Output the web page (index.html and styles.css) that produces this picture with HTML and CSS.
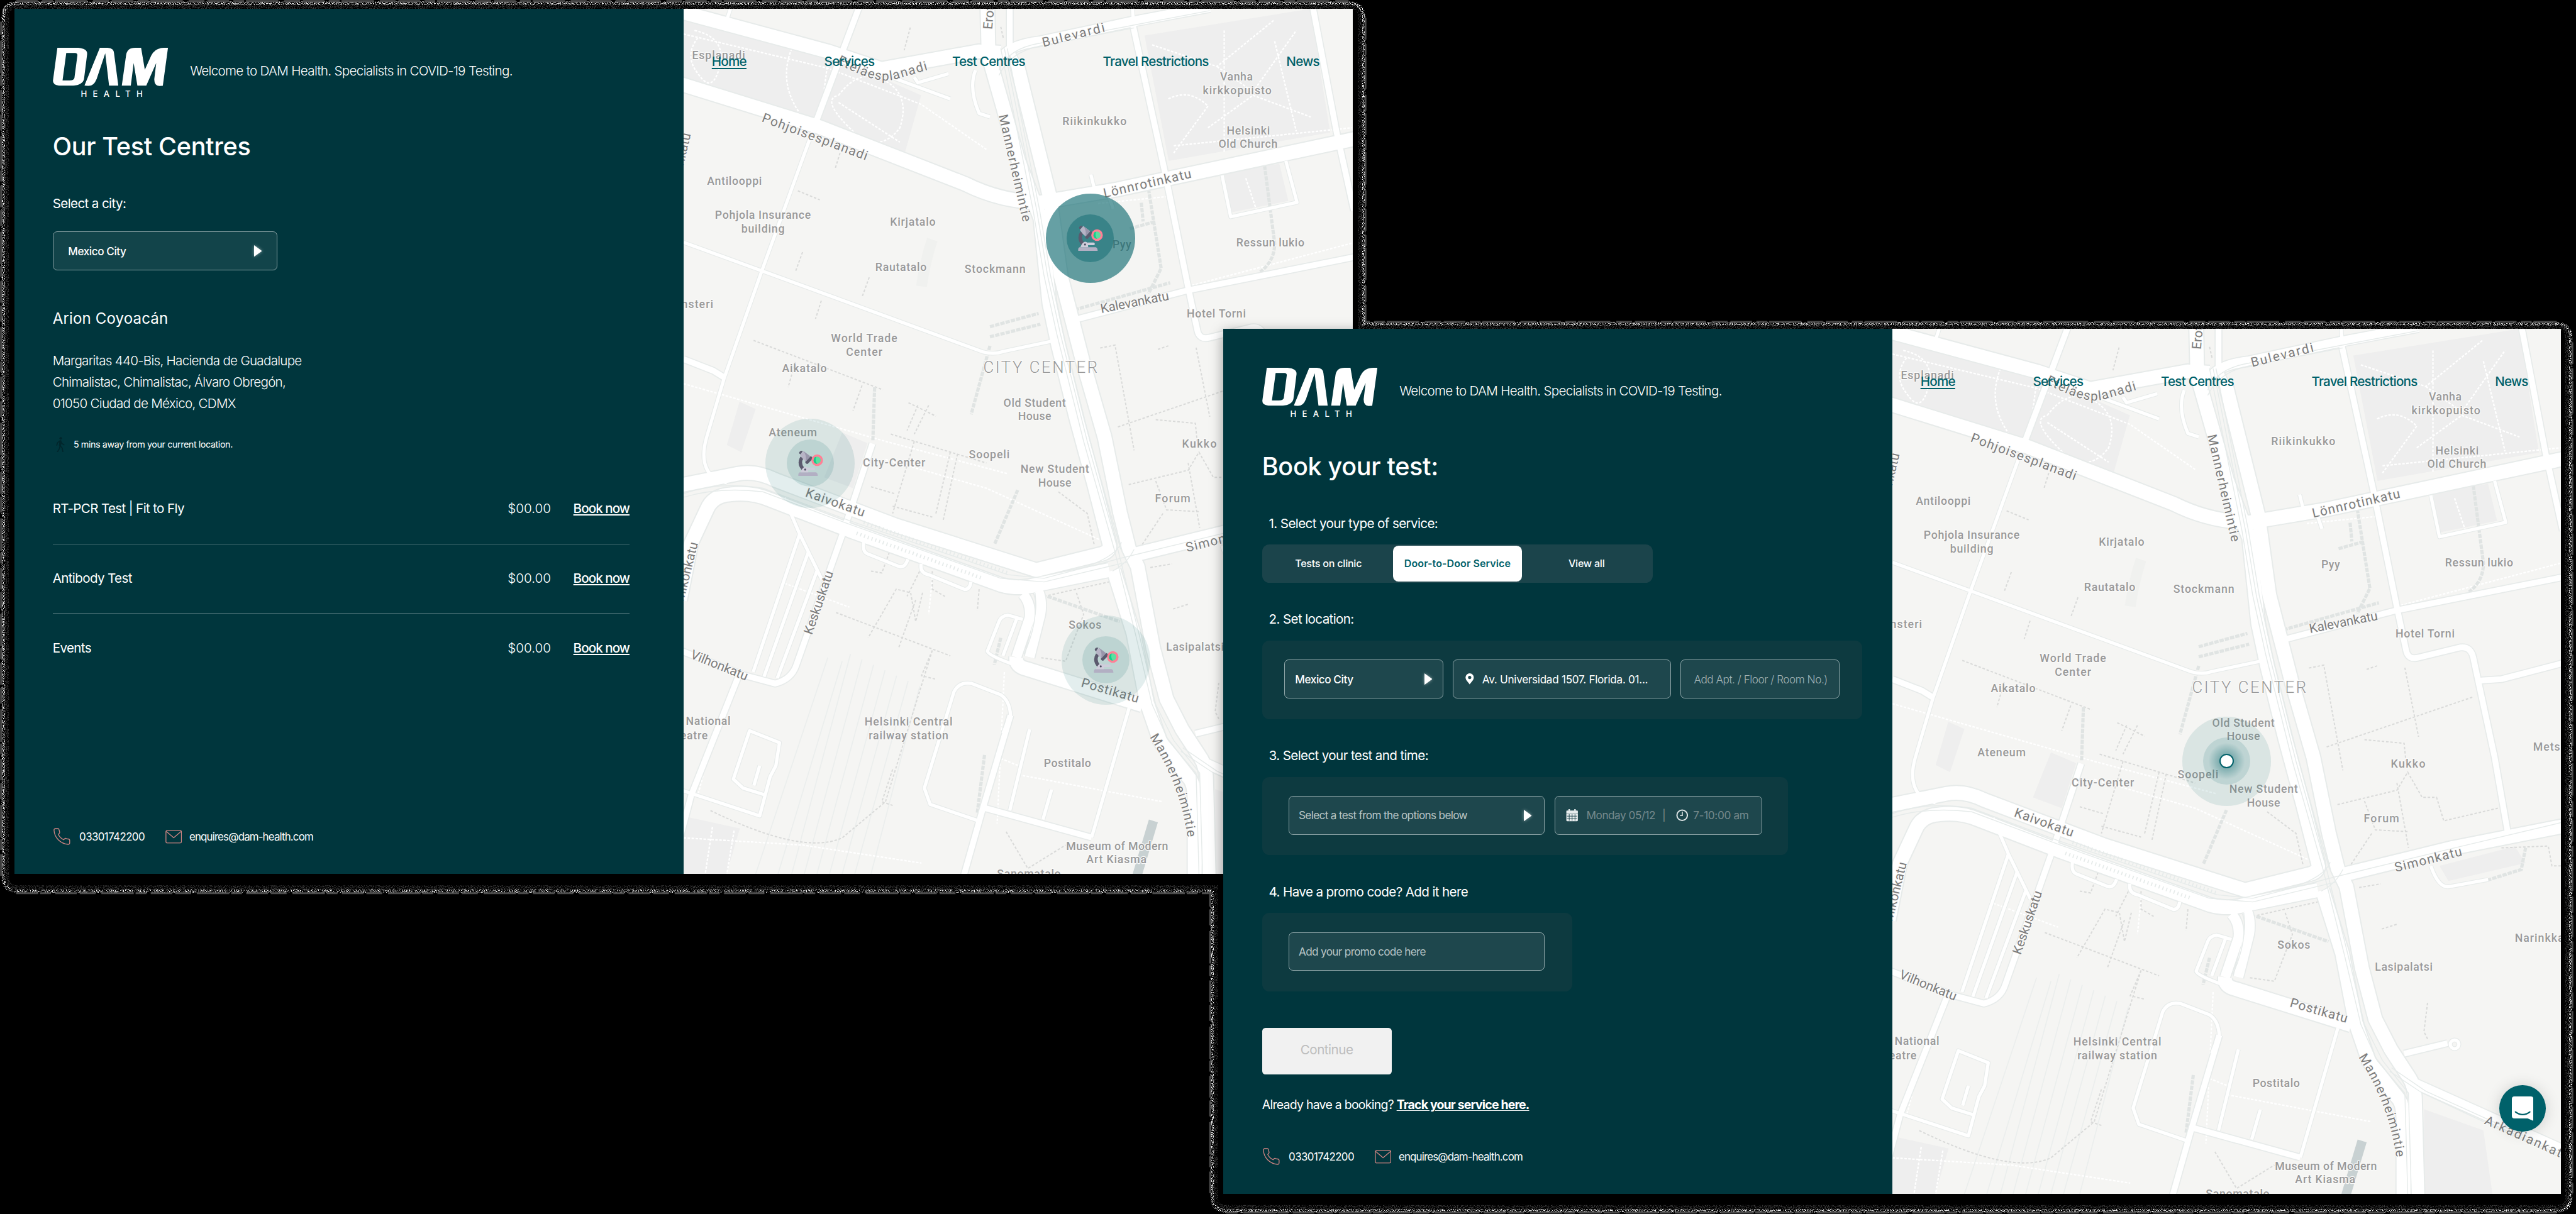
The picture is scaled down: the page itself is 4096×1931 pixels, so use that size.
FILE: index.html
```html
<!DOCTYPE html>
<html lang="en">
<head>
<meta charset="utf-8">
<title>DAM Health</title>
<link rel="stylesheet" href="styles.css">
</head>
<body>
<svg class="defs" aria-hidden="true">
  <defs>
    <filter id="speckle" filterUnits="userSpaceOnUse" x="0" y="0" width="7144" height="3368">
      <feTurbulence type="fractalNoise" baseFrequency="0.55" numOctaves="2" seed="4" result="n"/>
      <feColorMatrix in="n" type="matrix" values="0 0 0 0 1  0 0 0 0 1  0 0 0 0 1  9 0 0 0 -4.5" result="s"/>
      <feComposite in="s" in2="SourceGraphic" operator="in"/>
    </filter>
  </defs>
  <symbol id="logo" viewBox="78 65 962 318">
    <path fill="#fff" fill-rule="evenodd" d="M116 65H290Q368 72 364 118L338 325Q326 374 248 380H130Q78 374 79 340ZM190 108L159 337H215Q254 336 258 316L283 126Q283 110 262 108Z"/>
    <path fill="#fff" d="M470 65H535Q585 68 588 108L624 380H547L515 110L443 325Q420 383 375 383Q355 383 342 379Z"/>
    <path fill="#fff" d="M653 380L689 125Q698 65 765 65H814L845 248L898 130Q930 65 1005 65H1038L995 382Q985 384 965 384Q922 380 924 325L940 192L857 380H783L752 192L728 380Z"/>
  </symbol>
  <symbol id="phone" viewBox="0 0 24 24"><path fill="none" stroke="currentColor" stroke-width="1.2" stroke-linejoin="round" d="M23 18v3.2a2 2 0 0 1-2.2 2C10 22.500 1.500 14 .8 3.100A2 2 0 0 1 2.800.9H6a2 2 0 0 1 2 1.700c.2 1 .4 2 .7 2.900a2 2 0 0 1-.4 2.100L6.900 9.200a16 16 0 0 0 7.500 7.500l1.400-1.400a2 2 0 0 1 2.100-.4c1 .3 1.900.6 2.900.7A2 2 0 0 1 23 18z"/></symbol>
  <symbol id="mail" viewBox="0 0 46 38"><g fill="none" stroke="currentColor" stroke-width="2.300" stroke-linejoin="round"><rect x="1.500" y="1.500" width="43" height="35" rx="4"/><path d="M2 4l21 18L44 4"/></g></symbol>
  <symbol id="walk" viewBox="0 0 27 43"><circle cx="15" cy="4" r="3.600" fill="currentColor"/><path fill="none" stroke="currentColor" stroke-width="3" stroke-linecap="round" stroke-linejoin="round" d="M14 11l-1 14M13 11l-7 5-2 7M15 12l3 6 6 4M13 25l-2 8-5 8M14 25l5 6 2 10"/><path stroke="currentColor" stroke-width="6" stroke-linecap="round" d="M14 12l-1 11"/></symbol>
  <symbol id="arrow" viewBox="0 0 22 32"><path fill="#fff" d="M0 0l22 16L0 32z"/></symbol>
  <symbol id="pin" viewBox="0 0 24 31"><path fill="#fff" fill-rule="evenodd" d="M12 0a11.500 11.500 0 0 1 11.500 11.500C23.500 19 15 26 12 31 9 26 .5 19 .5 11.500A11.500 11.500 0 0 1 12 0zm0 7a4.500 4.500 0 1 0 0 9 4.500 4.500 0 0 0 0-9z"/></symbol>
  <symbol id="calendar" viewBox="0 0 34 34"><path fill="#e6eced" d="M3 4h28a2 2 0 0 1 2 2v6H1V6a2 2 0 0 1 2-2zM7 0h4v6H7zM23 0h4v6h-4zM1 13h32v18a3 3 0 0 1-3 3H4a3 3 0 0 1-3-3z"/><path stroke="#1b444b" stroke-width="1.600" d="M3 19.500h28M3 26.500h28M9 14v18M17 14v18M25 14v18"/></symbol>
  <symbol id="clock" viewBox="0 0 34 34"><circle cx="17" cy="17" r="14.500" fill="none" stroke="#dfe6e7" stroke-width="3.500"/><path fill="none" stroke="#dfe6e7" stroke-width="2.600" d="M17.500 7v11H11"/></symbol>
  <symbol id="scope" viewBox="150 140 210 214">
    <path fill="none" stroke="#5b5a6e" stroke-width="28" d="M186 200q-30 48 8 92"/>
    <path fill="#5b5a6e" d="M163 160q8-20 30-14l-18 28q-12-4-12-14zM212 236l44-46q16 4 18 20l-42 42q-18 0-20-16z"/>
    <path fill="#b7b4c6" d="M170 180l28-32 56 42-38 42q-24-18-46-52z"/><path fill="#9996ab" d="M198 148l56 42-38 42q10-50-18-84z"/>
    <path fill="#b2afc3" d="M168 320h132q14 4 15 30H157q-4-24 11-30z"/>
    <path fill="#cfcddb" d="M174 320q18-44 40-44 24 0 24 44z"/><path fill="#cfcddb" d="M230 282h52q10 2 10 11t-10 11h-52z"/>
    <circle cx="212" cy="298" r="8" fill="#4d4c60"/>
    <circle cx="310" cy="222" r="47" fill="#ff8096"/><circle cx="310" cy="222" r="29" fill="#5cdfa0"/><path fill="#10cf8b" d="M290 198q-20 30 2 50l18 4q-20-28-8-58z"/>
  </symbol>
</svg>

<svg class="edge" viewBox="0 0 7144 3368" aria-hidden="true">
  <g filter="url(#speckle)">
    <path class="dust" d="M45 14H3740Q3777 14 3777 50V903H7090Q7124 903 7124 940V3320Q7124 3354 7090 3354H3400Q3367 3354 3367 3320V2467H45Q14 2467 14 2430V50Q14 14 45 14Z"/>
    <path class="dust bright" d="M45 9H3740Q3782 9 3782 50V898H7090Q7129 898 7129 940V3320Q7129 3359 7090 3359H3400Q3362 3359 3362 3320V2472H45Q9 2472 9 2430V50Q9 9 45 9Z"/>
  </g>
  <path class="dash" d="M45 3H3740M3787 50V893H7090M7134 950V3310M7090 3364H3400M3356 3310V2478H45M3 2430V60"/>
</svg>

<main class="canvas">
  <section class="window centres">
    <div class="panel">
      <header class="brand">
        <div class="logo"><svg class="mark"><use href="#logo"/></svg><span class="health">HEALTH</span></div>
        <p class="welcome">Welcome to DAM Health. Specialists in COVID-19 Testing.</p>
      </header>
      <h1>Our Test Centres</h1>
      <p class="label">Select a city:</p>
      <div class="field city"><span class="strong">Mexico City</span><svg class="arrow"><use href="#arrow"/></svg></div>
      <h2>Arion Coyoacán</h2>
      <address>Margaritas 440-Bis, Hacienda de Guadalupe<br>Chimalistac, Chimalistac, Álvaro Obregón,<br>01050 Ciudad de México, CDMX</address>
      <p class="distance"><svg class="walk"><use href="#walk"/></svg><span>5 mins away from your current location.</span></p>
      <ul class="tests">
        <li><span class="name">RT-PCR Test | Fit to Fly</span><span class="price">$00.00</span><a class="book">Book now</a></li>
        <li><span class="name">Antibody Test</span><span class="price">$00.00</span><a class="book">Book now</a></li>
        <li><span class="name">Events</span><span class="price">$00.00</span><a class="book">Book now</a></li>
      </ul>
      <footer><svg class="phone"><use href="#phone"/></svg><span class="tel">03301742200</span><svg class="mail"><use href="#mail"/></svg><span class="email">enquires@dam-health.com</span></footer>
    </div>
    <div class="map">
      <svg class="tiles" id="city-map" viewBox="0 0 1856 2400" preserveAspectRatio="none">
        <g class="park">
          <path d="M0 27L401 126 659 240 610 414 377 308 0 193zM1279 74L1739 0 1794 343 1346 422zM1500 454L1653 430 1678 533 1518 565zM0 2240L156 2274 119 2400H0zM1475 2165L1640 2224 1665 2400H1475zM1518 1490L1727 1436 1757 1482 1543 1532zM155 1090L200 1110 160 1230 120 1210zM440 1175L510 1205 470 1330 390 1300z"/>
        </g>
        <g class="rails"><path d="M463 1790L300 2400M495 1805L335 2400M527 1820L370 2400M559 1835L405 2400M591 1850L440 2400M623 1865L475 2400M655 1880L520 2400M440 1810L262 2400M400 1800L200 2400"/></g>
        <g class="dots-white">
          <path d="M30 60q90 20 70 100t-60 20q-40-50 0-100M300 110q-40 100 30 190M401 140L380 300M430 240q60-80 130-40t40 130q-60 80-140 0t-30-90M430 260L600 370M0 70L401 165 659 265 840 390M1300 100L1480 160 1640 30M1480 160L1580 230 1700 60M1345 250q60-30 110 20L1360 400M1455 330L1580 240 1740 300M1500 60L1500 400M1640 90L1700 340M0 1040L560 1200 900 1290M270 1590L460 1660M890 1840L870 2260M0 2300L330 2320 660 2370M560 1250L840 1330 1170 1480M690 1580L680 1680M1050 700L1100 980 1240 1480M1360 380L1855 330M1400 770L1855 650M1560 470L1590 560M90 1990L40 2180M80 2270L60 2400M140 2280L120 2400M880 2080L930 2100M930 2125L1330 2200M1150 540L1350 520"/>
        </g>
        <g class="dots">
          <path d="M194 920L553 1057M495 1045L470 1115M310 980L290 1050M317 505L378 530M434 400L420 445M330 675L310 730M515 745L495 800M382 810L366 860M629 52L612 115M880 50L888 85M624 1093L700 1130M680 1100L640 1180M650 1100L620 1170M575 1180L840 1260M640 1200L580 1400M740 1230L700 1400M760 1235L720 1420M520 1326L585 1345M580 1380L690 1410M1156 941L1197 933 1250 1225M1316 945L1345 935M1422 940L1460 1132M1205 1160L1612 1021M1310 1140L1420 1150 1425 1200M1235 1320L1400 1280 1430 1230 1470 1300 1510 1300 1530 1365 1680 1330M1310 1310L1340 1390 1430 1395M1400 1260L1432 1440M1330 1400L1270 1490M1040 1340L1120 1400 1140 1490M520 1560L550 1565 570 1510M663 1620L644 1700 630 1620 590 1610 512 1745M644 1640L596 1775M423 1675L740 1795M690 1780L560 2200 440 2300Q330 2350 70 2222M690 1780L660 1850 700 1860M580 2110L550 2200 580 2210M660 1550L620 1630M690 1560L690 1610 725 1630M820 1610L815 1670M1000 1630L1180 1590M1090 1620L1110 1680 1060 1810 990 1800M895 2283L955 2385 1060 2320M1485 1870L1475 1950 1485 1970M1295 1550L1355 1540M1358 1665L1400 1652M1690 1440L1820 1435 1830 1490 1855 1490"/>
        </g>
        <g class="ticks"><path d="M850 935L798 1125M927 1335L863 1485M1010 1630L1210 1700M530 1050L525 1200M1270 538L1275 590M1238 610L1310 590M1290 500L1325 720 1290 790M1610 420L1640 650Q1640 700 1600 730M850 882L985 845M850 910L990 875M1085 835L1350 760M880 1745L862 1820M835 2070L815 2230M1650 1530L1745 1500 1757 1440"/></g>
        <g class="lots"><path d="M690 640q-20 60-30 130"/><path class="kiasma" d="M1291 2249L1316 2257 1273 2400H1246z"/></g>
        <g class="roads case"></g>
        <g class="roads fill">
          <g class="w10">
            <path d="M365 320L217 727 113 1023 64 1188Q40 1270 89 1306L120 1315M0 648L217 727 831 952Q860 960 890 950L1027 921M130 0L120 30"/>
            <path d="M322 1457L193 1840M346 1507L223 1853M371 1557L260 1857M279 1357L322 1457 383 1582"/>
            <path d="M-5 2168L211 2239 240 2130 256 2100 266 2036 183 2003 138 2137 165 2162 223 2180M211 2100L195 2155"/>
            <path d="M819 2253L684 2207 668 2162 750 1895Q765 1865 800 1872L880 1903Q905 1920 907 1960L886 2010"/>
            <path d="M1132 2299L1236 1940M960 1999L905 2224M1021 2166L997 2249M941 1694L900 1682Q880 1685 875 1700L843 1782Q845 1795 929 1824M925 1690L886 1795"/>
            <path d="M500 1478Q495 1505 510 1512L600 1548Q615 1550 622 1527M659 1540Q655 1565 680 1570L780 1611Q795 1610 797 1590"/>
            <path d="M1494 462L1518 577 1702 537 1671 422M585 193L740 250M1494 1490Q1515 1550 1543 1548L1653 1528M1130 460L1140 500M1180 520L1192 555M810 170Q790 220 820 290L850 300M640 190L650 205 735 180M1245 -10L1248 40"/>
            <circle cx="1560" cy="1985" r="12"/>
          </g>
          <g class="w18">
            <path d="M489 -10L365 320M1745 -10L1812 343 1860 560M1076 865L1395 782 1870 687M905 -10V110L923 146M1628 976L1690 972 1870 925M0 972L82 1004 113 1023"/>
            <path d="M1248 35V51L1334 446 1401 778 1425 890Q1430 920 1460 912L1575 884Q1605 880 1612 913L1671 1188 1708 1400"/>
            <path d="M524 1206L444 1448 313 1820Q300 1860 254 1872L168 1849 -10 1780M150 1857L21 2182 -10 2300M907 1960L831 2216 776 2410M831 2216L1132 2299M1420 2011L1540 1982"/>
          </g>
          <g class="w28">
            <path d="M941 1623Q965 1650 960 1690L923 1799M984 1615Q996 1640 990 1680L960 1799"/>
            <path d="M880 140Q900 100 990 90L1248 35 1460 -5"/>
            <path d="M1444 2091L1870 2282"/>
          </g>
          <g class="w40">
            <path d="M-20 205L377 328 782 486Q880 535 990 537L1199 502 1880 357"/>
            <path d="M-20 5L400 118 549 167 819 118 880 122"/>
            <path d="M843 -10L846 130 929 422 990 581 1015 818 1040 936 1089 1134 1138 1315 1181 1482Q1186 1505 1160 1512L978 1557 585 1432 254 1307Q200 1280 150 1290L-10 1322"/>
            <path d="M923 146L1015 517 1046 739 1107 976 1168 1188 1211 1398 1236 1498 1260 1548 1303 1774 1340 1915 1383 1999 1432 2074Q1450 2100 1450 2140L1457 2410"/>
            <path d="M-10 1640L21 1482 64 1390Q80 1350 130 1347 190 1340 240 1362L463 1448 880 1598Q930 1612 978 1598L1181 1557"/>
            <path d="M1193 1557L1248 1732 1285 1924 1322 2032 1401 2132Q1418 2150 1418 2200V2410"/>
            <path d="M923 1799Q920 1825 954 1832L1273 1932"/>
            <path d="M1248 1515L1555 1440 1870 1378"/>
          </g>
        </g>
        <g class="tracks">
          <path d="M890 110L980 560 1010 740 1045 900 1120 1200 1205 1500 1265 1740 1310 1930 1360 2030 1432 2120 1440 2400M880 110L970 560 1000 740 1035 900 1110 1200 1195 1500 1255 1740 1300 1930 1345 2030 1422 2120 1430 2400M898 110L988 560 1018 740 1053 900 1128 1200 1213 1500M875 170Q900 110 990 95L1250 45 1460 5M875 185Q905 120 990 103L1250 53M0 1345Q100 1310 220 1330L460 1420 900 1570 1000 1580 1230 1520 1560 1440 1855 1370M0 1355Q100 1325 220 1340L460 1430 880 1580 1000 1590 1230 1535M1380 2060L1470 2120 1855 2300M1385 2050L1480 2115 1855 2285M975 1620Q985 1700 945 1790M1110 1550Q1200 1520 1215 1480M1190 1560Q1230 1540 1250 1500"/>
          <path class="sleepers" d="M500 1425L900 1565M480 1455L830 1580"/>
        </g>
        <g class="poi">
          <text x="97" y="140" textLength="147">Esplanadi</text>
          <text x="1534" y="199" textLength="91">Vanha</text><text x="1536" y="237" textLength="191">kirkkopuisto</text>
          <text x="1140" y="323" textLength="178">Riikinkukko</text>
          <text x="1567" y="348" textLength="120">Helsinki</text><text x="1566" y="386" textLength="164">Old Church</text>
          <text x="141" y="488" textLength="152">Antilooppi</text>
          <text x="220" y="583" textLength="266">Pohjola Insurance</text><text x="220" y="621" textLength="120">building</text>
          <text x="636" y="601" textLength="126">Kirjatalo</text><text x="603" y="727" textLength="142">Rautatalo</text><text x="864" y="733" textLength="169">Stockmann</text>
          <text x="1216" y="664" textLength="52">Pyy</text><text x="1628" y="660" textLength="189">Ressun lukio</text>
          <text x="38" y="830" textLength="88">nsteri</text><text x="1478" y="857" textLength="164">Hotel Torni</text>
          <text x="501" y="925" textLength="184">World Trade</text><text x="501" y="962" textLength="101">Center</text>
          <text x="335" y="1008" textLength="124">Aikatalo</text>
          <text class="district" x="990" y="1010" textLength="317">CITY CENTER</text>
          <text x="974" y="1104" textLength="173">Old Student</text><text x="974" y="1141" textLength="92">House</text>
          <text x="303" y="1186" textLength="134">Ateneum</text><text x="1825" y="1170" textLength="94">Metso</text>
          <text x="584" y="1269" textLength="173">City-Center</text><text x="848" y="1247" textLength="113">Soopeli</text>
          <text x="1030" y="1288" textLength="190">New Student</text><text x="1030" y="1326" textLength="92">House</text>
          <text x="1431" y="1217" textLength="96">Kukko</text><text x="1357" y="1369" textLength="98">Forum</text>
          <text x="1114" y="1720" textLength="91">Sokos</text><text x="1419" y="1780" textLength="160">Lasipalatsi</text><text x="1795" y="1701" textLength="136">Narinkka</text>
          <text x="68" y="1987" textLength="124">National</text><text x="29" y="2026" textLength="76">eatre</text>
          <text x="624" y="1989" textLength="244">Helsinki Central</text><text x="624" y="2027" textLength="221">railway station</text>
          <text x="1065" y="2103" textLength="131">Postitalo</text>
          <text x="1203" y="2334" textLength="283">Museum of Modern</text><text x="1201" y="2370" textLength="167">Art Kiasma</text>
          <text x="958" y="2410" textLength="177">Sanomatalo</text>
        </g>
        <g class="street">
          <text transform="translate(998 106) rotate(-14)" textLength="178">Bulevardi</text>
          <path class="guide" id="etela" d="M424 150Q490 186 530 195T600 192L710 160"/>
          <text textLength="268"><textPath href="#etela">Eteläesplanadi</textPath></text>
          <text transform="translate(856 58) rotate(-85)">Erottaja</text>
          <text transform="translate(215 312) rotate(20.500)" textLength="310">Pohjoisesplanadi</text>
          <text transform="translate(874 296) rotate(77.200)" textLength="304">Mannerheimintie</text>
          <text transform="translate(1168 524) rotate(-13)" textLength="249">Lönnrotinkatu</text>
          <text transform="translate(1159 844) rotate(-11)" textLength="193">Kalevankatu</text>
          <text class="end" transform="translate(20 348) rotate(-77)">Kluuvikatu</text>
          <text transform="translate(336 1352) rotate(19.500)" textLength="172">Kaivokatu</text>
          <text transform="translate(356 1738) rotate(-71)" textLength="184">Keskuskatu</text>
          <text class="end" transform="translate(40 1483) rotate(-76)">Mikonkatu</text>
          <text transform="translate(1397 1507) rotate(-14)" textLength="191">Simonkatu</text>
          <text transform="translate(17 1801) rotate(22)" textLength="168">Vilhonkatu</text>
          <text transform="translate(1101 1880) rotate(16)" textLength="165">Postikatu</text>
          <path class="guide" id="manner" d="M1293 2020Q1388 2170 1401 2325"/>
          <text textLength="300"><textPath href="#manner">Mannerheimintie</textPath></text>
          <text transform="translate(1641 2205) rotate(24)" textLength="254">Arkadiankatu</text>
        </g>
      </svg>
      <nav><a class="on">Home</a><a>Services</a><a>Test Centres</a><a>Travel Restrictions</a><a>News</a></nav>
      <span class="marker strong-marker m1"><span class="core"><svg><use href="#scope"/></svg></span></span>
      <span class="marker m2"><span class="core"><svg><use href="#scope"/></svg></span></span>
      <span class="marker m3"><span class="core"><svg><use href="#scope"/></svg></span></span>
    </div>
  </section>

  <section class="window booking">
    <div class="panel">
      <header class="brand">
        <div class="logo"><svg class="mark"><use href="#logo"/></svg><span class="health">HEALTH</span></div>
        <p class="welcome">Welcome to DAM Health. Specialists in COVID-19 Testing.</p>
      </header>
      <h1>Book your test:</h1>
      <p class="label step1">1. Select your type of service:</p>
      <div class="segments"><span>Tests on clinic</span><span class="active">Door-to-Door Service</span><span>View all</span></div>
      <p class="label step">2. Set location:</p>
      <div class="group location">
        <div class="field f-city"><span class="strong">Mexico City</span><svg class="arrow"><use href="#arrow"/></svg></div>
        <div class="field f-street"><svg class="pin"><use href="#pin"/></svg><span class="value">Av. Universidad 1507. Florida. 01...</span></div>
        <div class="field f-apt"><span class="hint">Add Apt. / Floor / Room No.)</span></div>
      </div>
      <p class="label step">3. Select your test and time:</p>
      <div class="group wide">
        <div class="field f-test"><span class="hint bright">Select a test from the options below</span><svg class="arrow"><use href="#arrow"/></svg></div>
        <div class="field f-time"><svg class="ic"><use href="#calendar"/></svg><span class="dim day">Monday 05/12</span><span class="dim bar">|</span><svg class="ic"><use href="#clock"/></svg><span class="dim hour">7-10:00 am</span></div>
      </div>
      <p class="label step">4. Have a promo code? Add it here</p>
      <div class="group promo">
        <div class="field f-test"><span class="hint bright">Add your promo code here</span></div>
      </div>
      <button class="continue">Continue</button>
      <p class="track">Already have a booking? <a>Track your service here.</a></p>
      <footer><svg class="phone"><use href="#phone"/></svg><span class="tel">03301742200</span><svg class="mail"><use href="#mail"/></svg><span class="email">enquires@dam-health.com</span></footer>
    </div>
    <div class="map">
      <svg class="tiles" id="city-map-copy" viewBox="0 0 1856 2400" preserveAspectRatio="none"></svg>
      <nav><a class="on">Home</a><a>Services</a><a>Test Centres</a><a>Travel Restrictions</a><a>News</a></nav>
      <span class="marker m4"><span class="core glow"><span class="dot"></span></span></span>
      <span class="chat"><svg viewBox="0 0 60 68"><path fill="#fff" d="M7 0H53Q60 0 60 7V68L44 61H7Q0 61 0 54V7Q0 0 7 0Z"/><path fill="none" stroke="#00616a" stroke-width="4" stroke-linecap="round" d="M10 43Q30 58 50 43"/></svg></span>
    </div>
  </section>
</main>
<script src="map.js"></script>
</body>
</html>
```
FILE: styles.css
```css
/* 1rem = 100 artboard units */
html { font-size: 57.335px; }
* { box-sizing: border-box; }
body { margin: 0; background: #000; font-family: Inter, "Liberation Sans", sans-serif; color: #fff; overflow: hidden; }
h1, h2, p, ul { margin: 0; padding: 0; }
.defs { position: absolute; width: 0; height: 0; }
.canvas { position: relative; width: 71.44rem; height: 33.68rem; overflow: hidden; }
.edge { position: absolute; left: 0; top: 0; width: 71.44rem; height: 33.68rem; }
.dust { fill: none; stroke: #fff; stroke-opacity: .22; stroke-width: 22; }
.dust.bright { stroke-opacity: .95; stroke-width: 9; }
.dash { fill: none; stroke: #4c4c4c; stroke-width: 5; stroke-dasharray: 60 12 30 5 90 16 44 8; }

.window { position: absolute; display: flex; width: 37.11rem; height: 24rem; background: #00363d; }
.centres { left: .4rem; top: .24rem; }
.booking { left: 33.92rem; top: 9.12rem; box-shadow: 0 .08rem .35rem rgba(0,0,0,.38); }
.panel { flex: 0 0 18.56rem; display: flex; flex-direction: column; align-items: flex-start; padding: 1.09rem 0 .8rem 1.06rem; }
.booking .panel { padding-left: 1.08rem; }

.brand { display: flex; height: 1.37rem; }
.logo { width: 3.2rem; display: flex; flex-direction: column; }
.mark { flex: none; width: 3.2rem; height: 1.06rem; }
.health { flex: none; margin: .1rem 0 0 .78rem; font-size: .23rem; line-height: .23rem; letter-spacing: .163rem; font-weight: 500; }
.welcome { margin-left: .61rem; line-height: 1.3rem; font-size: .36rem; font-weight: 300; letter-spacing: -.034em; white-space: nowrap; }
h1 { margin-top: .98rem; font-size: .69rem; line-height: .8rem; font-weight: 500; letter-spacing: -.008em; white-space: nowrap; }
.label { font-size: .36rem; line-height: .5rem; font-weight: 400; letter-spacing: -.031em; margin-top: .93rem; white-space: nowrap; }
.field { display: flex; align-items: center; height: 1.08rem; border: .025rem solid #8fa6a9; border-radius: .12rem; background: rgba(255,255,255,.07); font-size: .3rem; white-space: nowrap; }
.arrow { width: .22rem; height: .32rem; margin-left: auto; filter: drop-shadow(0 0 .05rem rgba(255,255,255,.5)); }
.city { width: 6.24rem; margin-top: .51rem; padding: 0 .41rem; }
.strong { font-weight: 500; letter-spacing: -.026em; }
.value { letter-spacing: -.018em; }
h2 { margin-top: 1.05rem; font-size: .42rem; line-height: .6rem; font-weight: 400; letter-spacing: .005em; }
address { margin-top: .56rem; font-style: normal; font-size: .36rem; line-height: .6rem; font-weight: 300; letter-spacing: -.036em; white-space: nowrap; }
.distance { display: flex; align-items: center; margin-top: .6rem; height: .44rem; font-size: .25rem; letter-spacing: -.029em; }
.walk { width: .27rem; height: .43rem; margin: 0 .24rem 0 .07rem; color: #00262c; }
.tests { list-style: none; width: 16rem; margin-top: .62rem; }
.tests li { display: flex; align-items: center; height: 1.93rem; padding-bottom: .04rem; font-size: .36rem; border-bottom: .02rem solid #4f7479; }
.tests li:last-child { border: 0; height: 1.88rem; padding: 0; }
.name { flex: 1; letter-spacing: -.032em; }
.price { font-weight: 300; width: 1.2rem; margin-right: .62rem; }
.book { font-weight: 500; letter-spacing: -.047em; text-decoration: underline; text-underline-offset: .04rem; width: 1.56rem; white-space: nowrap; }
footer { display: flex; align-items: center; height: .46rem; margin-top: auto; font-size: .295rem; white-space: nowrap; }
.phone { width: .47rem; height: .47rem; margin: 0 .24rem 0 .03rem; color: #cf8583; }
.tel { width: 1.82rem; letter-spacing: -.036em; }
.email { letter-spacing: -.051em; }
.mail { width: .46rem; height: .38rem; margin: 0 .21rem 0 .56rem; color: #cf8583; }

.step1 { margin: .92rem 0 0 .19rem; }
.step { margin: .77rem 0 0 .19rem; }
.segments { display: flex; width: 10.84rem; height: 1.07rem; margin-top: .32rem; padding: .04rem .05rem; border-radius: .2rem; background: #1b444b; font-size: .28rem; font-weight: 500; letter-spacing: -.014em; }
.segments span { flex: 1; display: flex; align-items: center; justify-content: center; white-space: nowrap; }
.segments .active { background: #fff; color: #00616a; border-radius: .15rem; font-weight: 600; letter-spacing: .005em; }
.group { display: flex; align-items: flex-start; height: 2.18rem; margin-top: .33rem; border-radius: .2rem; background: #0d3a40; padding: .53rem 0 0 .73rem; }
.location { width: 16.64rem; padding-left: .62rem; gap: .27rem; }
.wide { width: 14.58rem; gap: .28rem; }
.promo { width: 8.61rem; }
.f-city { width: 4.4rem; padding: 0 .28rem; }
.f-street { width: 6.05rem; padding-left: .34rem; }
.f-apt { width: 4.41rem; padding-left: .35rem; }
.f-test { width: 7.1rem; padding: 0 .33rem 0 .27rem; }
.f-time { width: 5.77rem; padding-left: .31rem; }
.pin { width: .24rem; height: .31rem; margin-right: .22rem; }
.ic { width: .34rem; height: .34rem; }
.hint { color: #a3b3b5; font-weight: 300; letter-spacing: -.028em; }
.hint.bright { color: #b9c5c6; font-weight: 400; letter-spacing: -.039em; }
.dim { color: #75898c; letter-spacing: -.028em; }
.day { margin-left: .22rem; width: 1.9rem; }
.bar { width: .49rem; text-align: center; margin-right: .09rem; }
.hour { margin-left: .14rem; letter-spacing: -.02em; }
.continue { width: 3.59rem; height: 1.29rem; margin-top: 1.01rem; padding: 0 0 .1rem; border: 0; border-radius: .09rem; background: #f1f1f1; color: #bdbdbd; font: 400 .36rem Inter, sans-serif; letter-spacing: -.025em; }
.track { margin-top: .59rem; line-height: .5rem; font-size: .34rem; letter-spacing: -.038em; white-space: nowrap; }
.track a { font-weight: 700; letter-spacing: -.043em; text-decoration: underline; text-underline-offset: .04rem; }

.map { position: relative; flex: 1; overflow: hidden; background: #f5f5f3; }
.tiles { position: absolute; inset: 0; width: 100%; height: 100%; }
nav { position: relative; display: flex; justify-content: space-between; padding: 1.23rem .92rem 0 .78rem; font-size: .36rem; line-height: .5rem; font-weight: 500; letter-spacing: -.037em; color: #00616a; white-space: nowrap; }
.on { text-decoration: underline; text-underline-offset: .05rem; }
.marker { position: absolute; width: 2.47rem; height: 2.47rem; margin: -1.235rem 0 0 -1.235rem; border-radius: 50%; display: flex; align-items: center; justify-content: center; background: rgba(0,97,104,.11); }
.core { width: 1.31rem; height: 1.31rem; border-radius: 50%; display: flex; align-items: center; justify-content: center; background: rgba(0,97,104,.13); }
.core svg { width: .72rem; height: .73rem; }
.strong-marker { background: rgba(0,97,104,.6); }
.strong-marker .core { background: rgba(0,97,104,.42); }
.m1 { left: 11.28rem; top: 6.37rem; }
.m2 { left: 3.51rem; top: 12.61rem; }
.m3 { left: 11.71rem; top: 18.07rem; }
.m4 { left: 9.27rem; top: 12rem; }
.core.glow { background: radial-gradient(circle, rgba(0,97,104,.5) 12%, rgba(0,97,104,.13) 55%); }
.dot { width: .4rem; height: .4rem; border-radius: 50%; background: #fff; border: .045rem solid #00616a; }
.chat { position: absolute; left: 16.84rem; top: 20.99rem; width: 1.28rem; height: 1.28rem; border-radius: 50%; background: #00616a; display: flex; align-items: center; justify-content: center; box-shadow: 0 .02rem .4rem rgba(0,0,0,.16); }
.chat svg { width: .6rem; height: .68rem; }

.park path { fill: #eeeeee; }
.rails path { fill: none; stroke: #ebeeed; stroke-width: 3; }
.dots-white path { fill: none; stroke: #fff; stroke-width: 4; stroke-dasharray: 7 4; }
.dots path { fill: none; stroke: #d9dad9; stroke-width: 3.5; stroke-dasharray: 7 5; }
.ticks path { fill: none; stroke: #e0e4e3; stroke-width: 9; stroke-dasharray: 12 3; }
.lots path { fill: none; stroke: #f0f1ef; stroke-width: 30; }
.lots .kiasma { fill: #c8d1d2; stroke: none; }
.roads { fill: none; stroke-linejoin: round; }
.roads.case { stroke: #e7ebea; }
.roads.fill { stroke: #fff; }
.fill .w40 { stroke-width: 38; } .case .w40 { stroke-width: 45; }
.fill .w28 { stroke-width: 27; } .case .w28 { stroke-width: 33; }
.fill .w18 { stroke-width: 16; } .case .w18 { stroke-width: 22; }
.fill .w10 { stroke-width: 9; } .case .w10 { stroke-width: 13; }
.tracks path { fill: none; stroke: #e6ebea; stroke-width: 2.5; }
.tracks .sleepers { stroke-width: 10; stroke-dasharray: 3 8; }
.guide { fill: none; stroke: none; }
.poi, .street { font-family: Roboto, sans-serif; fill: #999; stroke: #fafaf9; stroke-width: 4; stroke-linejoin: round; paint-order: stroke; }
.poi text { text-anchor: middle; font-size: 31px; font-weight: 500; }
.poi .district { font-size: 45px; font-weight: 300; }
.street { fill: #7c7c7c; font-size: 36px; }
.street .end { text-anchor: end; }
.street .guide { stroke: none; }
```
FILE: map.js
```js
// Road casings reuse the road lines; the second map pane shows the same city map.
const map = document.getElementById('city-map');
map.querySelector('.case').innerHTML = map.querySelector('.fill').innerHTML;
document.getElementById('city-map-copy').innerHTML =
  map.innerHTML.replace(/(id="|#)(etela|manner)/g, '$1$2-copy');
```
